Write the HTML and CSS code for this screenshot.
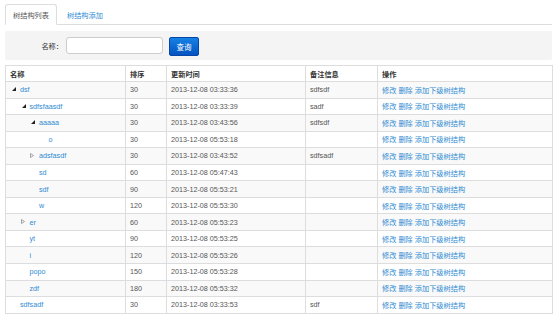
FILE: index.html
```html
<!DOCTYPE html>
<html lang="zh-CN">
<head>
<meta charset="utf-8">
<title>树结构列表</title>
<link rel="stylesheet" href="styles.css">
</head>
<body>
<div class="page">
  <ul class="tabs">
    <li class="tab active"><span>树结构列表</span></li>
    <li class="tab"><a href="#">树结构添加</a></li>
  </ul>
  <form class="search">
    <label class="search-label">名称：</label>
    <input class="search-input" type="text">
    <button class="btn" type="button">查询</button>
  </form>
  <table class="grid">
    <colgroup>
      <col class="c-name"><col class="c-sort"><col class="c-time"><col class="c-note"><col class="c-op">
    </colgroup>
    <thead>
      <tr><th>名称</th><th>排序</th><th>更新时间</th><th>备注信息</th><th>操作</th></tr>
    </thead>
    <tbody>
      <tr><td><span class="node l0"><span class="exp open"><svg width="4" height="4" viewBox="0 0 4 4"><polygon points="0,4 4,4 4,0" fill="#222"/></svg></span><a href="#">dsf</a></span></td><td>30</td><td>2013-12-08 03:33:36</td><td>sdfsdf</td><td class="ops"><a href="#">修改</a> <a href="#">删除</a> <a href="#">添加下级树结构</a></td></tr>
      <tr><td><span class="node l1"><span class="exp open"><svg width="4" height="4" viewBox="0 0 4 4"><polygon points="0,4 4,4 4,0" fill="#222"/></svg></span><a href="#">sdfsfaasdf</a></span></td><td>30</td><td>2013-12-08 03:33:39</td><td>sadf</td><td class="ops"><a href="#">修改</a> <a href="#">删除</a> <a href="#">添加下级树结构</a></td></tr>
      <tr><td><span class="node l2"><span class="exp open"><svg width="4" height="4" viewBox="0 0 4 4"><polygon points="0,4 4,4 4,0" fill="#222"/></svg></span><a href="#">aaaaa</a></span></td><td>30</td><td>2013-12-08 03:43:56</td><td>sdfsdf</td><td class="ops"><a href="#">修改</a> <a href="#">删除</a> <a href="#">添加下级树结构</a></td></tr>
      <tr><td><span class="node l3"><span class="exp"></span><a href="#">o</a></span></td><td>30</td><td>2013-12-08 05:53:18</td><td></td><td class="ops"><a href="#">修改</a> <a href="#">删除</a> <a href="#">添加下级树结构</a></td></tr>
      <tr><td><span class="node l2"><span class="exp shut"><svg width="4" height="5" viewBox="0 0 4 5"><polygon points="0.5,0.5 3.5,2.5 0.5,4.5" fill="none" stroke="#999" stroke-width="0.9"/></svg></span><a href="#">adsfasdf</a></span></td><td>30</td><td>2013-12-08 03:43:52</td><td>sdfsadf</td><td class="ops"><a href="#">修改</a> <a href="#">删除</a> <a href="#">添加下级树结构</a></td></tr>
      <tr><td><span class="node l2"><span class="exp"></span><a href="#">sd</a></span></td><td>60</td><td>2013-12-08 05:47:43</td><td></td><td class="ops"><a href="#">修改</a> <a href="#">删除</a> <a href="#">添加下级树结构</a></td></tr>
      <tr><td><span class="node l2"><span class="exp"></span><a href="#">sdf</a></span></td><td>90</td><td>2013-12-08 05:53:21</td><td></td><td class="ops"><a href="#">修改</a> <a href="#">删除</a> <a href="#">添加下级树结构</a></td></tr>
      <tr><td><span class="node l2"><span class="exp"></span><a href="#">w</a></span></td><td>120</td><td>2013-12-08 05:53:30</td><td></td><td class="ops"><a href="#">修改</a> <a href="#">删除</a> <a href="#">添加下级树结构</a></td></tr>
      <tr><td><span class="node l1"><span class="exp shut"><svg width="4" height="5" viewBox="0 0 4 5"><polygon points="0.5,0.5 3.5,2.5 0.5,4.5" fill="none" stroke="#999" stroke-width="0.9"/></svg></span><a href="#">er</a></span></td><td>60</td><td>2013-12-08 05:53:23</td><td></td><td class="ops"><a href="#">修改</a> <a href="#">删除</a> <a href="#">添加下级树结构</a></td></tr>
      <tr><td><span class="node l1"><span class="exp"></span><a href="#">yt</a></span></td><td>90</td><td>2013-12-08 05:53:25</td><td></td><td class="ops"><a href="#">修改</a> <a href="#">删除</a> <a href="#">添加下级树结构</a></td></tr>
      <tr><td><span class="node l1"><span class="exp"></span><a href="#">i</a></span></td><td>120</td><td>2013-12-08 05:53:26</td><td></td><td class="ops"><a href="#">修改</a> <a href="#">删除</a> <a href="#">添加下级树结构</a></td></tr>
      <tr><td><span class="node l1"><span class="exp"></span><a href="#">popo</a></span></td><td>150</td><td>2013-12-08 05:53:28</td><td></td><td class="ops"><a href="#">修改</a> <a href="#">删除</a> <a href="#">添加下级树结构</a></td></tr>
      <tr><td><span class="node l1"><span class="exp"></span><a href="#">zdf</a></span></td><td>180</td><td>2013-12-08 05:53:32</td><td></td><td class="ops"><a href="#">修改</a> <a href="#">删除</a> <a href="#">添加下级树结构</a></td></tr>
      <tr><td><span class="node l0"><span class="exp"></span><a href="#">sdfsadf</a></span></td><td>30</td><td>2013-12-08 03:33:53</td><td>sdf</td><td class="ops"><a href="#">修改</a> <a href="#">删除</a> <a href="#">添加下级树结构</a></td></tr>
    </tbody>
  </table>
</div>
</body>
</html>
```

FILE: styles.css
```css
html, body {
  margin: 0;
  padding: 0;
  background: #fff;
}
body {
  font-family: "Liberation Sans", "Noto Sans CJK SC", sans-serif;
  font-size: 7.2px;
  color: #555;
}
a {
  color: #2f8bd3;
  text-decoration: none;
}
.page {
  padding: 4px 6px 0 5px;
}
.tabs {
  list-style: none;
  margin: 0;
  padding: 0;
  display: flex;
  border-bottom: 1px solid #ddd;
}
.tab {
  height: 21px;
  box-sizing: border-box;
  padding: 0 7px;
  margin-right: 2px;
  margin-bottom: -1px;
  display: flex;
  align-items: center;
  border: 1px solid transparent;
  border-radius: 3px 3px 0 0;
}
.tab.active {
  border-color: #ddd;
  border-bottom-color: #fff;
  background: #fff;
  color: #555;
}
.search {
  margin: 6px 0 0;
  height: 29px;
  background: #f4f4f4;
  display: flex;
  align-items: center;
  border-radius: 2px;
}
.search-label {
  width: 58px;
  text-align: right;
  color: #333;
  margin-right: 3px;
}
.search-input {
  width: 97px;
  height: 17px;
  box-sizing: border-box;
  border: 1px solid #ccc;
  border-radius: 3px;
  background: #fff;
  margin: 0 6px 0 0;
  padding: 0 3px;
}
.btn {
  width: 30px;
  height: 19px;
  box-sizing: border-box;
  border: 1px solid #0447a8;
  border-radius: 2px;
  background: linear-gradient(#1682e6, #0452c0);
  color: #fff;
  font-family: "Liberation Sans", "Noto Sans CJK SC", sans-serif;
  font-size: 7.5px;
  padding: 0;
  margin-top: 1px;
}
.grid {
  margin-top: 5px;
  width: 547px;
  table-layout: fixed;
  border-collapse: separate;
  border-spacing: 0;
  border-right: 1px solid #ddd;
  border-bottom: 1px solid #ddd;
}
.c-name { width: 120px; }
.c-sort { width: 41px; }
.c-time { width: 139px; }
.c-note { width: 72px; }
.c-op { width: 175px; }
.grid th, .grid td {
  box-sizing: border-box;
  border-top: 1px solid #ddd;
  border-left: 1px solid #ddd;
  padding: 0 4px;
  text-align: left;
  vertical-align: middle;
  white-space: nowrap;
  overflow: hidden;
}
.grid th {
  height: 16px;
  font-weight: bold;
  color: #333;
}
.grid td {
  height: 16.55px;
}
.grid tbody tr:nth-child(odd) td {
  background: #f9f9f9;
}
.node {
  display: flex;
  align-items: center;
}
.l0 { padding-left: 0; }
.l1 { padding-left: 9.5px; }
.l2 { padding-left: 19px; }
.l3 { padding-left: 28.5px; }
.exp {
  width: 10px;
  height: 8px;
  flex: none;
  display: flex;
  align-items: center;
  justify-content: flex-start;
}
.exp.open svg {
  margin-left: 2px;
  margin-top: -1px;
}
.exp.shut svg {
  margin-left: 1px;
  margin-top: -1px;
}
.ops a {
  margin: 0;
}
```
